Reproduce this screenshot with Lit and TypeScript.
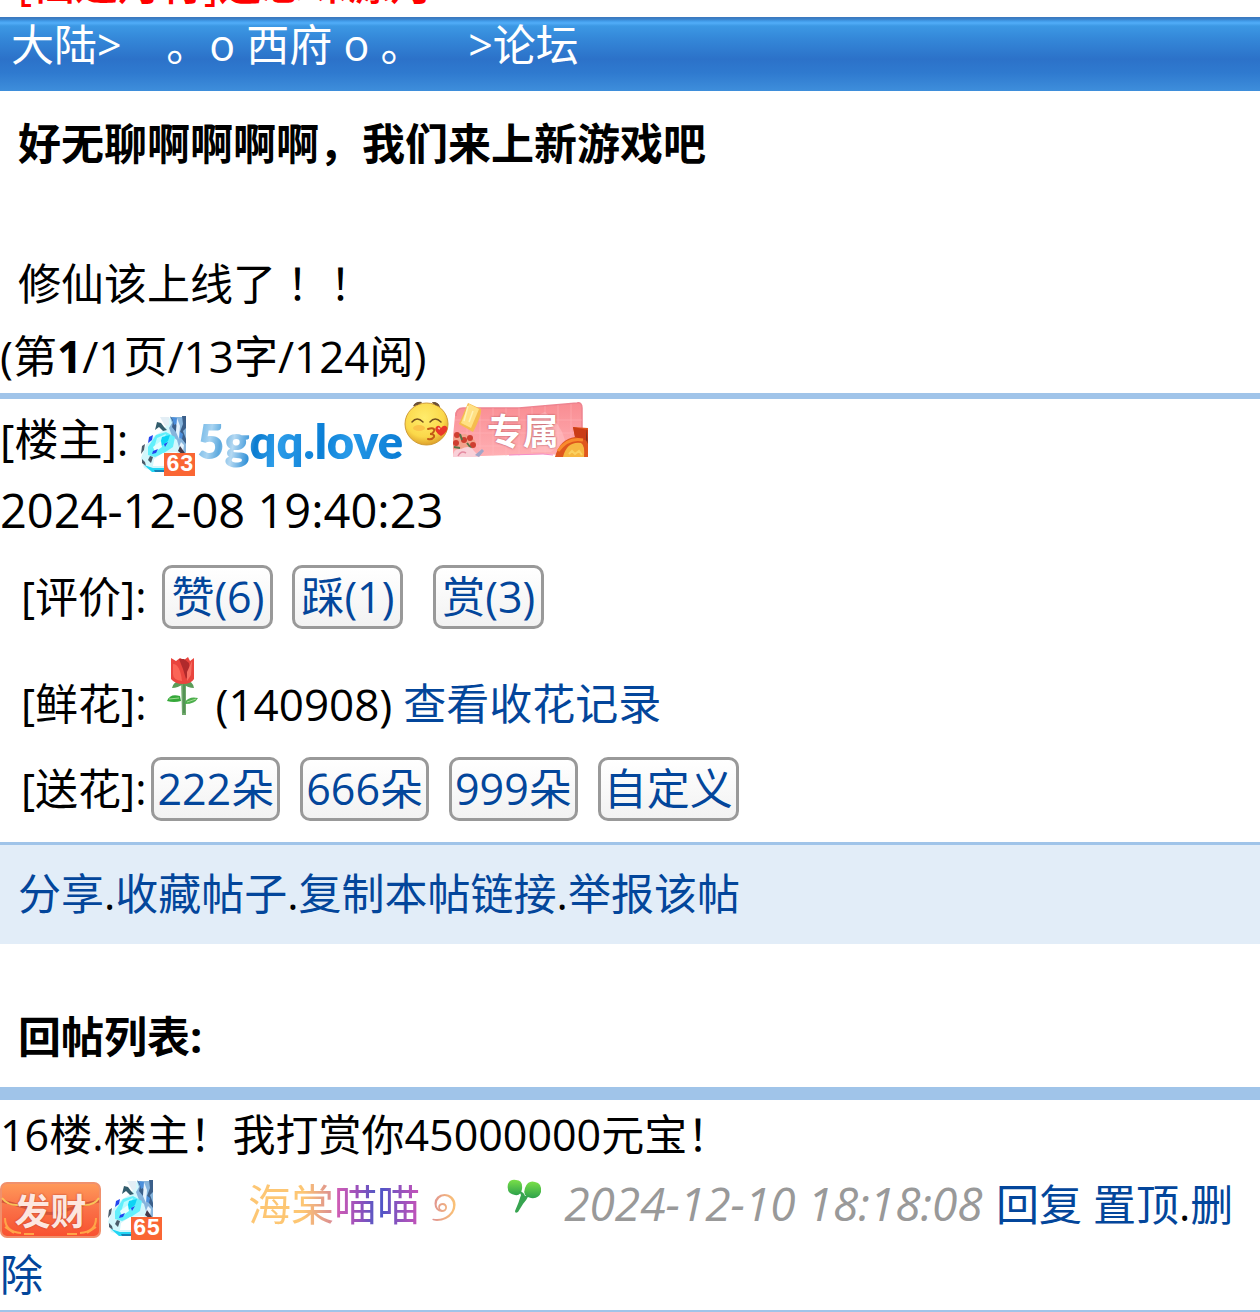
import { LitElement, html, css, nothing } from "lit";
import { customElement, property } from "lit/decorators.js";

@customElement("level-badge")
class LevelBadge extends LitElement {
  @property() level = "";
  static styles = css`
    :host { display: inline-block; }
    .badge { display: grid; width: 55px; height: 60px; }
    .art, .level { grid-area: 1 / 1; }
    .art { display: block; width: 55px; height: 60px; }
    .level {
      align-self: end; justify-self: end; width: 31px; height: 23px; background: #fa6634; color: #fff;
      font: 700 23px/24px "Liberation Mono", monospace; text-align: center;
    }
  `;
  render() {
    return html`<span class="badge">
      <svg class="art" viewBox="0 0 55 60" aria-hidden="true">
        <defs><filter id="soft"><feGaussianBlur stdDeviation="0.7" /></filter></defs>
        <g filter="url(#soft)">
          <path d="M24 14L30 1H46V37L42 45 17 56 4 52 1 42 6 29 14 20Z" fill="#d3f7fc" />
          <path d="M20 1h9v8l-4 1z" fill="#e3eef5" />
          <path d="M30 1h16v36l-6-2-3-11-5-4-3-8 3-5z" fill="#86b4dc" />
          <path d="M30 0l3 6-1 5 4 5 1-6-3-6zM42 0h4v12l-3 3 3 8v5l-4-5-2-7 3-8z" fill="#3b5f8a" />
          <path d="M32 1l5 1 1 5-4 2zM39 15l4 3-1 5-4-2z" fill="#4b8fdc" />
          <path d="M37 2l3 8-1 13-3-7zM41 26l3 3-1 7-4-5z" fill="#e6f3fd" />
          <path d="M8 31l8-12 10-3 9 5-2 10-9 6-9 4-7-2z" fill="#62effb" />
          <path d="M17 22l9-4-3 8-9 6z" fill="#b9fbff" />
          <path d="M22 21l8-2-2 6-9 7z" fill="#0cd4f5" />
          <path d="M13 31l8-6 1 6-7 5z" fill="#e8feff" />
          <path d="M9 21l4-2-1 5-4 3zM13 35l5-2-2 4-4 1zM24 28l4-2-3 5z" fill="#2344ee" />
          <path d="M17 6l4 1 3 4 3 3-4 1-4-4-4 3z" fill="#315c6c" />
          <path d="M2 30l3-2-1 6-3 4zM2 43l3 3 1 4-4-3zM10 40l3 1-2 6-3-3z" fill="#4b5c6a" />
          <path d="M40 30l5 7-2 2-5-4z" fill="#443a4a" />
          <path d="M14 43l9-6 14-1-4 14H13z" fill="#fff" />
          <path d="M4 49l9 3 12 0-1 4-12 0z" fill="#20d6f4" />
          <path d="M14 54h12v2H15z" fill="#1580b4" />
        </g>
      </svg>
      <span class="level">${this.level}</span>
    </span>`;
  }
}

const kiss = html`<svg class="kiss" width="45" height="46" viewBox="0 0 45 46" role="img" aria-label="kiss">
  <defs><radialGradient id="face" cx="45%" cy="35%" r="65%"><stop offset="0" stop-color="#ffec6c" /><stop offset=".7" stop-color="#fbd84a" /><stop offset="1" stop-color="#dfa22c" /></radialGradient></defs>
  <path d="M9 5q3-5 9-4l-4 6zM28 1q7 0 8 5l-5 1z" fill="#6b5138" />
  <ellipse cx="22.500" cy="23" rx="21.500" ry="21" fill="url(#face)" stroke="#d09c34" stroke-width="1" />
  <path d="M10 4q2-3 6-3l-2 3zM29 1q5 0 6 4l-4-1z" fill="#6b5138" />
  <ellipse cx="15" cy="27" rx="6" ry="3" fill="#fbc348" />
  <path d="M8 21q5-6 11 0M26 21q5-6 11 0" fill="none" stroke="#75501d" stroke-width="1.500" stroke-linecap="round" />
  <path d="M24 28q7-2 6 2-1 3-4 3 5 0 4 3-2 3-6 2" fill="none" stroke="#c35a17" stroke-width="2" stroke-linecap="round" />
  <path d="M37 35q-8-5-5-9 3-3 5 1 3-4 6-1 2 4-6 9z" fill="#e9372a" /><path d="M34 27l2 1" stroke="#ffb3a4" stroke-width="1.500" />
</svg>`;

const exclusive = html`<span class="exclusive">
  <svg width="135" height="55" viewBox="0 0 135 55" aria-hidden="true">
    <defs><linearGradient id="pink" x1="0" y1="0" x2="0" y2="1"><stop offset="0" stop-color="#f98c92" /><stop offset="1" stop-color="#ffb0b4" /></linearGradient></defs>
    <path d="M2 14Q2 6 10 6L66 6 124 1q5-1 5 5V54L90 52 0 55V34z" fill="url(#pink)" />
    <path d="M3 14Q3 6 10 6L66 6 124 1q5-1 5 5V48" fill="none" stroke="#ee8490" stroke-width="1.500" />
    <path d="M14 6V54M27 6V54M40 6V54M53 6V54M66 6V54M79 5V53M92 4V53M105 3V53M118 2V54M2 18H129M2 31H129M2 44H129" stroke="#ffbcc0" stroke-width=".7" opacity=".6" />
    <path d="M78 50Q74 15 92 10q16 12 20 28l-14 12z" fill="#ffc4c7" opacity=".5" />
    <path d="M56 53l34-1 10 1" fill="none" stroke="#f58cc9" stroke-width="1" />
    <path d="M15 1L28 7q1 6-8 23L6 22z" fill="#f5bc4e" /><path d="M16 2L26 7 18 26 8 21z" fill="#ffe184" /><path d="M15 4L11 19M20 9l-4 11" stroke="#fff2b5" stroke-width="1.500" />
    <path d="M0 36q4-6 8-3 6-3 8 3 6-1 7 6l-6 7-17-2z" fill="#f3a28d" />
    <g fill="#cf3e30"><circle cx="4" cy="33" r="3" /><circle cx="11" cy="38" r="3" /><circle cx="17" cy="36" r="3" /><circle cx="20" cy="43" r="3" /><circle cx="3" cy="41" r="3" /></g>
    <path d="M7 32l2 6M14 41l4 5M1 45l6 1" stroke="#587247" stroke-width="2" />
    <path d="M0 55q0-9 8-8 9-5 13 2l6 6z" fill="#f9d0d8" /><path d="M5 54q3-6 8-3" fill="none" stroke="#e58ca2" stroke-width="1.500" />
    <path d="M22 53l7-6 2 2-5 6z" fill="#a2a5c8" />
    <path d="M102 55q5-18 20-20l-2-10 15 1V55z" fill="#df571d" /><path d="M120 25l15 3v11l-13-4z" fill="#ca3c16" />
    <path d="M110 55q4-16 18-14 4 2 3 14z" fill="#f6b741" /><path d="M105 49q10-14 25-11" fill="none" stroke="#f98b2c" stroke-width="3" />
    <path d="M116 52l3-3 3 3 4-3 3 4" fill="none" stroke="#fbd161" stroke-width="2" />
    <path d="M133 26v12l2 4z" fill="#7f3321" />
  </svg>
  <span class="exclusive-text">专属</span>
</span>`;

const rose = html`<svg class="rose" width="32" height="60" viewBox="0 0 32 60" role="img" aria-label="flower">
  <path d="M14 22h5v36h-4z" fill="#6fa86b" />
  <path d="M17 24v32" stroke="#4c8c51" stroke-width="1.500" />
  <path d="M5 31q1-6 9-8h4q8 1 9 8-6 0-11-4-5 4-11 4z" fill="#5b9c58" />
  <path d="M0 44q3-8 13-5l1 5q-7 2-14 0z" fill="#35a83a" /><path d="M18 45q4-6 13-4-3 6-13 6z" fill="#4cae4d" />
  <path d="M2 42l10-1M20 45l9-3" stroke="#9edb8e" />
  <path d="M4 1l5 3 4-3 4 2 4-3 2 4 4-3v21q-3 5-11 5T4 22z" fill="#e9453e" />
  <path d="M12 2l5 0 5 4 1 9-4 7-3-10z" fill="#b02a2c" />
  <path d="M6 7q7 0 9 17-9-1-9-7z" fill="#fb6557" /><path d="M25 4l-1 14-4 6 0-9z" fill="#f86f63" />
</svg>`;

const clover = html`<svg class="clover" width="35" height="36" viewBox="0 0 35 36" role="img" aria-label="sprout">
  <defs><linearGradient id="leaf" x1="0" y1="0" x2="0" y2="1"><stop offset="0" stop-color="#79df48" /><stop offset="1" stop-color="#2ea24b" /></linearGradient></defs>
  <path d="M1 6Q3 1 9 2q7 0 6 9-1 7-7 6-9-1-7-11z" fill="url(#leaf)" />
  <path d="M18 10q3-8 10-6 7 1 6 10-2 7-10 6-9-2-6-10z" fill="url(#leaf)" />
  <path d="M12 13q5 1 6 5l4-1q-3 6-6 9l-5 8q-3 2-3-1 4-9 6-16z" fill="#37a450" />
</svg>`;

const fortune = html`<span class="fortune">
  <svg width="101" height="56" viewBox="0 0 101 56" aria-hidden="true">
    <defs><linearGradient id="env" x1="0" y1="0" x2="0" y2="1"><stop offset="0" stop-color="#ff9a59" /><stop offset=".5" stop-color="#fa7047" /><stop offset="1" stop-color="#f8502f" /></linearGradient></defs>
    <rect x="1" y="1" width="99" height="54" rx="6" fill="url(#env)" stroke="#f0906c" stroke-width="2" />
    <path d="M2 19Q22 24 36 29 50 34 64 29 80 23 99 19" fill="none" stroke="#d3563b" stroke-width="3" />
    <path d="M2 16Q8 24 20 23M99 16Q94 24 82 23" fill="none" stroke="#f9c45a" stroke-width="2" />
    <path d="M5 36q0 14 16 15M5 45l9 6M96 36q0 14-16 15M96 45l-9 6M24 52h10M67 52h10" fill="none" stroke="#ffa548" stroke-width="2" />
  </svg>
  <span class="fortune-text">发财</span>
</span>`;

@customElement("app-root")
class AppRoot extends LitElement {
  static styles = css`
    :host {
      display: block; background: #fff; color: #000; overflow: hidden;
      font: 43px/70px "Open Sans", "Noto Sans CJK SC", sans-serif;
    }
    * { box-sizing: border-box; }
    a { color: #03469b; text-decoration: none; }
    svg { display: block; }
    .notice { height: 17px; padding-left: 18px; display: flex; align-items: flex-end; overflow: hidden; white-space: nowrap; }
    .notice a { color: #f00; line-height: 66px; font-weight: 500; }
    .crumbs {
      height: 74px; padding-left: 11px; line-height: 56px; color: #fff; white-space: pre;
      background: linear-gradient(#3b78bd 0, #3b80c8 2px, #419be9 4px, #51adf8 6px, #3c98e4 9px, #3487d8 22px, #2c72c9 42px, #2f7acf 56px, #3e8edb 74px);
    }
    .crumbs a { color: #fff; }
    .title { margin: 0; padding: 18px 18px 0; font-size: 43px; line-height: 70px; font-weight: 700; }
    .body { margin: 0; padding: 70px 18px 0; font-family: "Open Sans", "Noto Sans CJK TC", sans-serif; }
    .pages { margin: 0; padding: 2px 0; border-bottom: 6px solid #a0c4e9; font-size: 44px; }
    .author { display: flex; align-items: flex-start; height: 76px; }
    .author-label { line-height: 80px; font-size: 44px; }
    .author level-badge { margin: 17px 2px 0 12px; }
    .author-name {
      font: 800 47px/84px Lato, sans-serif; color: transparent; background-clip: text; -webkit-background-clip: text;
      background-image: linear-gradient(100deg, #4fa5df 0, #a9d4f1 9%, #5ca9de 14%, #b5d9f2 20%, #0b7cd0 30%, #2d9de9 40%, #0b7fd6 60%, #2799e8 72%, #0779d1 100%);
    }
    .kiss { margin: 2px 4px 0 1px; }
    .exclusive, .fortune { display: grid; }
    .exclusive { margin-top: 3px; }
    .exclusive > *, .fortune > * { grid-area: 1 / 1; }
    .exclusive-text, .fortune-text { font-family: "Noto Sans CJK SC", sans-serif; font-weight: 700; text-align: center; }
    .exclusive-text { font-size: 36px; line-height: 55px; color: #fff; padding-left: 4px; text-shadow: 0 0 2px #a63c46; }
    .fortune-text { font-size: 36px; line-height: 54px; color: #fde6df; text-shadow: 0 0 2px #b33528; }
    .date { display: block; font-size: 47px; }
    .row { display: flex; align-items: center; padding-left: 21px; }
    .rating { height: 104px; }
    .rating .btn + .btn { margin-left: 19px; }
    .rating .btn.reward { margin-left: 30px; }
    .rating .label { margin-right: 16px; }
    .flowers { height: 94px; align-items: flex-end; padding-bottom: 4px; }
    .rose { margin: 0 16px 22px 21px; align-self: flex-end; }
    .count { font-size: 44px; margin-right: 11px; }
    .send { height: 92px; gap: 20px; margin-bottom: 7px; }
    .send .label { margin-right: -15px; }
    .btn {
      height: 64px; padding: 0 6px; border: 3px solid #999; border-radius: 10px; font: inherit; line-height: 54px;
      color: #03469b; background: linear-gradient(#fff, #f2f2f2);
    }
    .send .btn { padding: 0 3px; }
    .tools { height: 102px; padding: 14px 18px; border-top: 3px solid #a0c4e9; background: #e2edf8; }
    .list-title { margin: 0; padding: 58px 18px 15px; font-size: 43px; line-height: 70px; border-bottom: 13px solid #a0c4e9; }
    .reply { border-bottom: 2px solid #a0c4e9; }
    .reply p { margin: 0; }
    .fortune { display: inline-grid; vertical-align: middle; margin-right: 6px; }
    .reply level-badge { height: 60px; vertical-align: middle; margin-right: 86px; }
    .member, .swirl { color: transparent; background-clip: text; -webkit-background-clip: text; }
    .member { background-image: linear-gradient(90deg, #fdc673 0 32%, #dd9190 48%, #cf5db5 52%, #9a50bb 64%, #5558c4 74%, #5155c7 78%, #9152bd 88%, #c853b9 100%); }
    .swirl { background-image: linear-gradient(90deg, #dd8f93, #fdc673); margin-right: 50px; }
    .clover { display: inline-block; vertical-align: 7px; margin-right: 22px; }
    .when { font-size: 46px; line-height: 40px; font-style: italic; color: #999; margin-right: 2px; }
  `;
  render() {
    const gap = "\u00a0".repeat(3);
    return html`
      <div class="notice"><a href="#notice">[仙道月行]逍忘味源月</a></div>
      <nav class="crumbs"><a href="#home">大陆</a>&gt;${gap} <a href="#house">。o 西府 o 。</a>${gap} &gt;<a href="#forum">论坛</a></nav>
      <h1 class="title">好无聊啊啊啊啊，我们来上新游戏吧</h1>
      <p class="body">修仙该上线了！！</p>
      <p class="pages">(第<b>1</b>/1页/13字/124阅)</p>
      <div class="author">
        <span class="author-label">[楼主]:</span><level-badge level="63"></level-badge>
        <a class="author-name" href="#author">5gqq.love</a>${kiss}${exclusive}
      </div>
      <time class="date" datetime="2024-12-08T19:40:23">2024-12-08 19:40:23</time>
      <div class="row rating">
        <span class="label">[评价]:</span>
        <button class="btn">赞(6)</button><button class="btn">踩(1)</button><button class="btn reward">赏(3)</button>
      </div>
      <div class="row flowers">
        <span class="label">[鲜花]:</span>${rose}<span class="count">(140908)</span><a href="#flowers">查看收花记录</a>
      </div>
      <div class="row send">
        <span class="label">[送花]:</span>
        ${["222朵", "666朵", "999朵", "自定义"].map((t) => html`<button class="btn">${t}</button>`)}
      </div>
      <div class="tools">${["分享", "收藏帖子", "复制本帖链接", "举报该帖"].map((t, i) => html`${i ? "." : nothing}<a href="#tool-${i}">${t}</a>`)}</div>
      <h2 class="list-title">回帖列表:</h2>
      <article class="reply">
        <p>16楼.楼主！我打赏你45000000元宝！</p>
        <p>${fortune}<level-badge level="65"></level-badge><a class="member" href="#member">海棠喵喵</a> <span class="swirl">୭</span>${clover}<time class="when" datetime="2024-12-10T18:18:08">2024-12-10 18:18:08</time> <a href="#reply">回复</a> <a href="#pin">置顶</a>.<a href="#delete">删除</a></p>
      </article>
    `;
  }
}
